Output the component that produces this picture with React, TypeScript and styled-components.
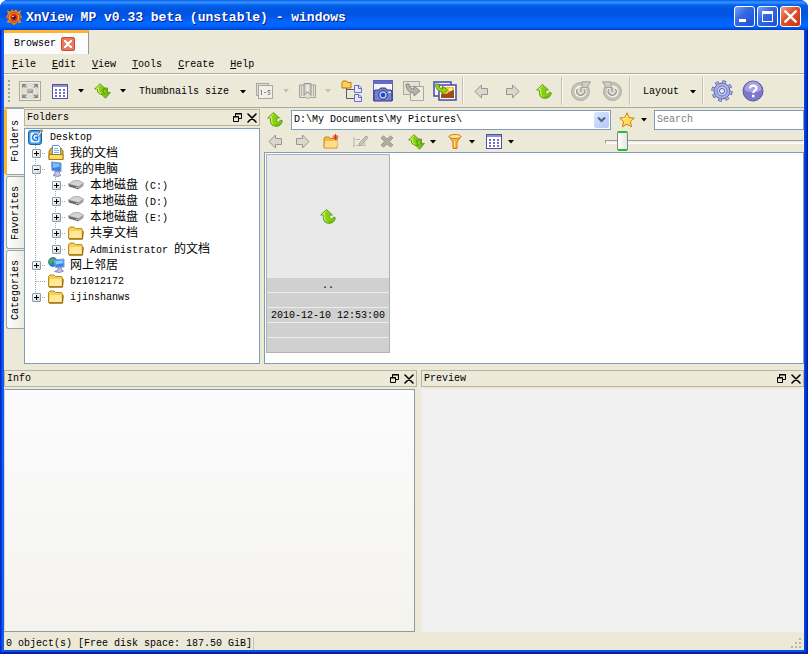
import React from "react";
import styled, { createGlobalStyle, css } from "styled-components";

const face = "#ece9d8";
const line = "#aca899";
const field = "#7f9db9";

const GlobalStyle = createGlobalStyle`
  * { box-sizing: border-box; }
  body { margin: 0; background: #fff; }
  body, button, input {
    font-family: "Liberation Mono", "Noto Sans CJK SC", monospace;
    font-size: 10px;
    line-height: 16px;
    color: #000;
  }
  button {
    margin: 0;
    padding: 0;
    border: 0;
    background: none;
    white-space: nowrap;
  }
  svg { display: block; flex: none; }
  ul { list-style: none; margin: 0; padding: 0; }
`;

/* ---------- window frame ---------- */

const Frame = styled.div`
  display: flex;
  flex-direction: column;
  min-height: 100vh;
  padding: 0 4px 4px;
  border-radius: 8px 8px 0 0;
  background: linear-gradient(90deg, #0019cf 0, #0831d9 1px, #166aee 3px, #0855dd 4px, #0855dd calc(100% - 4px), #0040e0 calc(100% - 3px), #0019a8 100%);
  box-shadow: inset 0 -2px #0a1fa8;
`;

const TitleBar = styled.header`
  display: flex;
  align-items: center;
  gap: 4px;
  height: 30px;
  margin: 0 -4px;
  padding: 3px 7px 0 6px;
  border-radius: 8px 8px 0 0;
  background: linear-gradient(#0058e6 0, #3a93ff 2px, #2a8bff 3px, #0364ee 5px, #0055e0 9px, #0054e3 15px, #0066ff 22px, #0066ff 26px, #0054e6 28px, #003dd7 100%);
`;

const Title = styled.h1`
  flex: 1;
  margin: 0;
  padding-top: 2px;
  font-size: 13px;
  line-height: 20px;
  font-weight: bold;
  color: #fff;
  text-shadow: 1px 1px #0a1883;
  white-space: nowrap;
`;

const CaptionButtons = styled.div`
  display: flex;
  gap: 2px;
`;

const CaptionButton = styled.button<{ $danger?: boolean }>`
  display: grid;
  place-items: center;
  width: 21px;
  height: 21px;
  border: 1px solid #fff;
  border-radius: 3px;
  background: ${(p) =>
    p.$danger
      ? "linear-gradient(135deg, #f0a088, #e2532f 40%, #c8350f)"
      : "linear-gradient(135deg, #7ba2f5, #3668e4 40%, #1f4fd0)"};
`;

const Client = styled.div`
  flex: 1;
  display: flex;
  flex-direction: column;
  background: ${face};
`;

/* ---------- tabs, menu, toolbar ---------- */

const TabStrip = styled.div`
  display: flex;
  height: 24px;
`;

const Tab = styled.div`
  display: flex;
  align-items: center;
  gap: 5px;
  padding: 0 13px 0 10px;
  border-top: 3px solid #ffb52e;
  border-right: 1px solid #919b9c;
  background: #fcfcfe;
`;

const TabClose = styled.button`
  display: grid;
  place-items: center;
  width: 14px;
  height: 14px;
  border: 1px solid #d9432a;
  border-radius: 2px;
  background: #e8795c;
`;

const MenuBar = styled.nav`
  display: flex;
  gap: 16px;
  height: 20px;
  padding: 3px 8px 0;
  border-bottom: 1px solid ${line};
`;

const ToolBar = styled.div`
  display: flex;
  align-items: center;
  height: 34px;
  border-top: 1px solid #fff;
  border-bottom: 1px solid ${line};
`;

const Grip = styled.span`
  width: 10px;
  height: 22px;
  background: repeating-linear-gradient(#a9a594 0 2px, transparent 2px 4px) 4px 0 / 2px 100% no-repeat;
`;

const Tool = styled.button<{ $w?: number }>`
  display: grid;
  place-items: center;
  flex: none;
  width: ${(p) => p.$w ?? 31}px;
  height: 24px;
`;

const DropTool = styled.button<{ $icon: number; $caret: number }>`
  display: grid;
  flex: none;
  grid-template-columns: ${(p) => p.$icon}px ${(p) => p.$caret}px;
  place-items: center;
  height: 24px;
`;

const TextTool = styled.button`
  display: flex;
  align-items: center;
  gap: 11px;
  height: 24px;
  padding: 2px 4px 0 10px;
`;

const Separator = styled.span`
  width: 2px;
  height: 28px;
  margin: 0 2px;
  border-left: 1px solid #c5c2b2;
  border-right: 1px solid #f8f7f1;
`;

const Spacer = styled.span<{ $w: number }>`
  flex: none;
  width: ${(p) => p.$w}px;
`;

/* ---------- panes ---------- */

const Panes = styled.main`
  flex: 1;
  display: grid;
  grid-template-rows: 256fr 263fr;
  gap: 5px;
`;

const TopPanes = styled.div`
  display: flex;
  gap: 4px;
`;

const BottomPanes = styled.div`
  display: grid;
  grid-template-columns: 413fr 383fr;
  gap: 4px;
`;

const LeftDock = styled.div`
  display: flex;
  flex: 0 0 32%;
`;

const SideTabs = styled.div`
  display: flex;
  flex-direction: column;
  align-items: flex-end;
  gap: 1px;
  width: 20px;
`;

const SideTab = styled.button<{ $active?: boolean }>`
  writing-mode: vertical-rl;
  transform: rotate(180deg);
  width: ${(p) => (p.$active ? 20 : 18)}px;
  padding: ${(p) => (p.$active ? "12px 1px 11px 0" : "8px 0 9px")};
  border: 1px solid #91a7b4;
  border-left: 0;
  border-radius: 0 3px 3px 0;
  background: linear-gradient(270deg, #fff, #eceadf);
  ${(p) =>
    p.$active &&
    css`
      border-right: 3px solid #ffb52e;
      background: #fcfcfe;
    `}
`;

const Pane = styled.section`
  display: flex;
  flex-direction: column;
  flex: 1;
  gap: 2px;
  min-width: 0;
  padding-top: 1px;
`;

const PaneHeader = styled.div`
  display: flex;
  align-items: center;
  gap: 5px;
  height: 17px;
  padding: 0 2px;
  border: 1px solid #b8b4a2;
`;

const PaneTitle = styled.h2`
  flex: 1;
  margin: 0;
  font-size: 10px;
  line-height: 14px;
  font-weight: normal;
`;

const InfoBody = styled.div`
  flex: 1;
  margin-right: 2px;
  border: 1px solid #919b9c;
  border-left-color: #d8d6c9;
  background: linear-gradient(#fcfcfe, #f4f3ee);
`;

const PreviewBody = styled.div`
  flex: 1;
  background: #f0f0f0;
`;

/* ---------- folder tree ---------- */

const TreeBox = styled.div`
  flex: 1;
  border: 1px solid ${field};
  background: #fff;
`;

const TreeRow = styled.li`
  display: flex;
  align-items: center;
  height: 16px;
  padding-left: 1px;
`;

const dots = "repeating-linear-gradient(#a5a396 0 1px, transparent 1px 2px)";
const hdots = "repeating-linear-gradient(90deg, #a5a396 0 1px, transparent 1px 2px)";

const Branch = styled.span<{ $through: boolean; $arm: boolean }>`
  display: grid;
  place-items: center;
  width: 20px;
  height: 16px;
  background-image: ${dots}, ${hdots};
  background-repeat: no-repeat;
  background-size: 1px ${(p) => (p.$through ? 16 : 8)}px, ${(p) => (p.$arm ? 10 : 0)}px 1px;
  background-position: 9px 0, 10px 8px;
`;

const Toggle = styled.button`
  display: grid;
  place-items: center;
  width: 9px;
  height: 9px;
  border: 1px solid #7f9db9;
  border-radius: 1px;
  background: linear-gradient(135deg, #fff, #d8d4c6);
`;

const NodeIcon = styled.span`
  display: grid;
  place-items: center;
  width: 16px;
  height: 16px;
  margin: 0 6px 0 2px;
`;

const NodeText = styled.span<{ $latin: boolean }>`
  padding-top: ${(p) => (p.$latin ? 2 : 0)}px;
  white-space: pre;
`;

const Han = styled.span`
  font-family: "Noto Sans CJK SC", sans-serif;
  font-size: 12px;
`;

/* ---------- browser ---------- */

const Browser = styled.section`
  display: flex;
  flex: 1;
  flex-direction: column;
  min-width: 0;
`;

const AddressRow = styled.div`
  display: flex;
  align-items: center;
  height: 23px;
`;

const Combo = styled.div`
  display: flex;
  flex: 1;
  align-items: center;
  height: 20px;
  margin: 0 0 0 5px;
  padding-right: 1px;
  border: 1px solid ${field};
  background: #fff;
`;

const TextField = styled.input`
  flex: 1;
  min-width: 0;
  width: 100%;
  height: 18px;
  padding: 0 2px;
  border: 0;
  outline: 0;
  background: #fff;
  &::placeholder { color: #808080; opacity: 1; }
`;

const ComboArrow = styled.button`
  display: grid;
  place-items: center;
  width: 15px;
  height: 16px;
  border-radius: 2px;
  background: linear-gradient(135deg, #dbe6fe, #b4c8f6);
`;

const SearchBox = styled.div`
  width: 150px;
  height: 20px;
  margin-left: 6px;
  border: 1px solid ${field};
`;

const ActionRow = styled.div`
  display: flex;
  align-items: center;
  gap: 5px;
  height: 21px;
`;

const ZoomSlider = styled.input`
  appearance: none;
  width: 199px;
  height: 20px;
  margin: 0 0 0 auto;
  background: none;
  &::-webkit-slider-runnable-track {
    height: 4px;
    border: 1px solid #fff;
    border-top-color: #9d9c99;
    border-left-color: #9d9c99;
    border-radius: 1px;
    background: #f3f2ea;
  }
  &::-webkit-slider-thumb {
    appearance: none;
    width: 11px;
    height: 20px;
    margin-top: -10px;
    border: 1px solid #778892;
    border-top: 2px solid #21c121;
    border-bottom: 2px solid #21c121;
    border-radius: 2px;
    background: linear-gradient(90deg, #fff, #e6e6de);
  }
`;

const FileList = styled.div`
  flex: 1;
  padding: 1px 1px 10px;
  border: 1px solid ${field};
  background: #fff;
`;

const Tile = styled.article`
  width: 124px;
  border: 1px solid #b0b0b0;
`;

const TileImage = styled.div`
  display: grid;
  place-items: center;
  height: 123px;
  background: #e9e9e9;
`;

const TileLine = styled.div`
  height: 15px;
  border-bottom: 1px solid #ececec;
  background: #d0d0d0;
  line-height: 15px;
  text-align: center;
  white-space: nowrap;
  &:last-child { height: 14px; border-bottom: 0; }
`;

const StatusBar = styled.footer`
  display: flex;
  align-items: flex-end;
  justify-content: space-between;
  height: 18px;
  padding: 0 2px;
`;

const StatusText = styled.span`
  padding-right: 1px;
  border-right: 1px solid #c5c2b2;
  line-height: 13px;
`;

/* ---------- icons ---------- */

const Caret = ({ dim }: { dim?: boolean }) => (
  <svg width="6" height="4" viewBox="0 0 6 4">
    <path d="M0 0h6L3 3.5z" fill={dim ? "#c2bfb0" : "#000"} />
  </svg>
);

const Cross = ({ size = 8, color = "#000", weight = 1.8 }) => (
  <svg width={size} height={size} viewBox="0 0 10 10">
    <path d="M1 1l8 8M9 1l-8 8" stroke={color} strokeWidth={weight} strokeLinecap="round" />
  </svg>
);

const AppLogo = () => (
  <svg width="16" height="16" viewBox="0 0 16 16">
    <path d="M1 1l3.500 2L6 0l2 2.500L10 0l1.500 3L15 1l-1 4 2 3-2 2 1 4-3.500-.5L8 16l-3.500-2.500L1 14l1-4-2-2 2-3z" fill="#f08a1c" />
    <ellipse cx="8" cy="8.500" rx="6" ry="4.800" fill="#f6a63c" stroke="#b5380f" />
    <circle cx="8" cy="8.500" r="3.800" fill="#d0300f" />
    <circle cx="8" cy="8.500" r="1.800" fill="#2a1a50" />
    <circle cx="7" cy="7.500" r="0.800" fill="#fff" />
  </svg>
);

const Refresh = () => (
  <svg width="17" height="16" viewBox="0 0 17 16">
    <g fill="#86d30c" stroke="#47850d" strokeWidth="0.700" strokeLinejoin="round">
      <path d="M9.500 5h4v4.500h3L11.500 15.300 6.500 10.200h2.600V8.500z" />
      <path d="M6 .7L11.500 6H8.700v2.500L11 11.300H6.500L3.500 9V6H.6z" />
    </g>
    <path d="M6 2L2.500 5.300h2V8.500L7 10.400" fill="none" stroke="#d6f870" />
    <path d="M12.500 6v4.300h2l-3 3.500" fill="none" stroke="#5fae0a" />
  </svg>
);

const UpArrow = () => (
  <svg width="16" height="15" viewBox="0 0 16 15">
    <path
      d="M6.500.5L12.500 6H9.700v2.500c0 1.500 1.200 2 2.300 1.300.8-.5 1.200-1.100 1.500-1.800l1.900.8c-.4 3.400-2.900 5.600-6.300 5.600C5.800 14.400 3.400 12.300 3.400 9V6H.6z"
      fill="#86d30c"
      stroke="#47850d"
      strokeWidth="0.700"
      strokeLinejoin="round"
    />
    <path d="M6.500 2L2.700 5.300h2V9c0 1.500.7 2.600 1.800 3.300" fill="none" stroke="#d6f870" />
    <path d="M8.500 12.800c2.600.4 4.600-.8 5.600-2.600" fill="none" stroke="#5fae0a" />
  </svg>
);

const SideArrow = ({ right }: { right?: boolean }) => (
  <svg width="15" height="15" viewBox="0 0 15 15">
    <path
      d={right ? "M14 7.500L7.500 1v3.500H1.500v6h6V14z" : "M1 7.500L7.500 1v3.500h6v6h-6V14z"}
      fill="#d9d8d0"
      stroke="#97958c"
      strokeLinejoin="round"
    />
  </svg>
);

const FullScreen = () => (
  <svg width="22" height="20" viewBox="0 0 22 20">
    <rect x=".5" y=".5" width="21" height="19" fill="#eeede6" stroke="#aaa89c" />
    <rect x="2" y="2" width="18" height="16" fill="#dddcd3" />
    <path d="M3 3h5L3 7zM19 3h-5l5 4zM3 17h5l-5-4zM19 17h-5l5-4z" fill="#8a8980" />
    <path d="M4 4l4 3M18 4l-4 3M4 16l4-3M18 16l-4-3" stroke="#8a8980" strokeWidth="1.500" />
    <rect x="7" y="7" width="8" height="6" fill="#b9b8ae" stroke="#f5f4ee" />
    <path d="M8 12h6V9z" fill="#9c9b91" />
  </svg>
);

const GridIcon = () => (
  <svg width="16" height="15" viewBox="0 0 16 15">
    <rect x=".5" y=".5" width="15" height="14" fill="#fff" stroke="#51519c" />
    <path d="M1 1h14v2H1z" fill="#8d8fd0" />
    {[5, 8, 11].map((y) => (
      <path key={y} d={`M3 ${y}h2v2h-2zM7 ${y}h2v2h-2zM11 ${y}h2v2h-2z`} fill="#6e70c4" />
    ))}
  </svg>
);

const PageRange = () => (
  <svg width="18" height="16" viewBox="0 0 18 16">
    <g stroke="#aaa89c">
      <rect x=".5" y=".5" width="12" height="12" fill="#deddd4" />
      <rect x="2.500" y="2.500" width="14" height="13" fill="#f0efe8" />
    </g>
    <path d="M4.500 8l1-1v5M8 9.500h2M14.500 7.500h-2.500v1.800h1.200c1.200 0 1.200 2.200 0 2.200H11.800" fill="none" stroke="#85847b" />
  </svg>
);

const Book = () => (
  <svg width="17" height="16" viewBox="0 0 17 16">
    <path d="M.5 2h5.500l2.500 1L11 2h5.500v12.500h-6l-2 1-2-1h-6z" fill="#e2e1d8" stroke="#a5a398" />
    <path d="M2.500 2v11M14.500 2v11" stroke="#b4b2a8" />
    <path d="M5 .5h7v12L8.500 9 5 12.500z" fill="#d0cfc5" stroke="#96948a" />
    <path d="M8.500 2v6" stroke="#f2f1eb" strokeWidth="2" />
  </svg>
);

const FolderTree = () => (
  <svg width="22" height="22" viewBox="0 0 22 22">
    <path d="M1 2.500L2 1h3.500l1 1.500H10V8H1z" fill="#fcd354" stroke="#b97a14" />
    <path d="M5.500 8v10.500h8M5.500 9.500h8" fill="none" stroke="#5c5a6e" />
    <g fill="#e6eaff" stroke="#6a6ec4">
      <path d="M13.500 5.500h4.500l2.500 2.500v4.500h-7z" />
      <path d="M13.500 14.500h4.500l2.500 2.500v4.500h-7z" />
    </g>
    <path d="M17.500 5.500v3h3M17.500 14.500v3h3" fill="none" stroke="#6a6ec4" />
  </svg>
);

const Camera = () => (
  <svg width="22" height="22" viewBox="0 0 22 22">
    <rect x="1.500" y=".5" width="19" height="20" fill="#f4f5ff" stroke="#5d5fa9" />
    <path d="M1 1h20v3H1z" fill="#6669c6" />
    <path d="M2 11l1-1h4l1.500-2h5L15 10h4l1 1v10H2z" fill="#7480d2" stroke="#34377d" />
    <circle cx="11" cy="15" r="4.200" fill="#c8d3ff" stroke="#2d2f75" />
    <circle cx="11" cy="15" r="2.300" fill="#1f45c9" />
    <path d="M16.500 11.500h2v1.500h-2z" fill="#fff" />
  </svg>
);

const Convert = () => (
  <svg width="22" height="20" viewBox="0 0 22 20">
    <rect x=".5" y=".5" width="16" height="13" fill="#e4e3da" stroke="#aaa89c" />
    <path d="M7.500 5.500h13v14h-13z" fill="#ecebe3" stroke="#aaa89c" />
    <path d="M3 3c0 6 3 9 8 9v3l6-5-6-5v3C8 8 6 6 6 3z" fill="#b4b3a9" stroke="#8d8b81" />
  </svg>
);

const PictureConvert = () => (
  <svg width="24" height="20" viewBox="0 0 24 20">
    <rect x="1" y="1" width="17" height="14" fill="#f3f4ff" stroke="#4348ad" strokeWidth="1.500" />
    <rect x="6" y="4" width="17" height="15" fill="#fff" stroke="#4348ad" strokeWidth="1.500" />
    <rect x="8" y="6" width="13" height="11" fill="#ffbd2e" />
    <path d="M8 17v-4c3-1 4 1 7-1 2-2 4-3 6-3v8z" fill="#a54a12" />
    <circle cx="17.500" cy="8.500" r="1.800" fill="#fff29c" />
    <path d="M2.500 3c0 5 3 8 7 8v3l5-5-5-4v3C7 8 6 6 6 3z" fill="#8fd416" stroke="#47850d" strokeWidth="0.800" />
  </svg>
);

const Rotate = ({ right }: { right?: boolean }) => (
  <svg width="20" height="20" viewBox="0 0 20 20">
    <g transform={right ? "translate(20 0) scale(-1 1)" : undefined}>
      <circle cx="9.500" cy="10.500" r="9" fill="#c4c3ba" stroke="#aeaca2" />
      <circle cx="9.500" cy="10.500" r="5" fill="#dddcd3" stroke="#f3f2ec" strokeWidth="2" />
      <path d="M10 6v5M6.500 8a4 4 0 1 0 6.500 0" fill="none" stroke="#96948a" strokeWidth="1.200" />
      <path d="M11 6.500V.8h8.500L16 6.500z" fill="#cfcec5" stroke="#a3a197" />
    </g>
  </svg>
);

const Gear = () => (
  <svg width="22" height="22" viewBox="0 0 22 22">
    <circle cx="11" cy="11" r="9" fill="none" stroke="#5a60a8" strokeWidth="3.400" strokeDasharray="3.600 3.469" />
    <circle cx="11" cy="11" r="8" fill="#a9b2e6" stroke="#5a60a8" />
    <circle cx="11" cy="11" r="9" fill="none" stroke="#a9b2e6" strokeWidth="2" strokeDasharray="2.600 4.469" strokeDashoffset="-0.500" />
    <circle cx="11" cy="11" r="5" fill="#c4cbf2" stroke="#7077bd" />
    <circle cx="11" cy="11" r="2.500" fill="#eeeff8" stroke="#5a60a8" />
  </svg>
);

const HelpIcon = () => (
  <svg width="22" height="22" viewBox="0 0 22 22">
    <circle cx="11" cy="11" r="10" fill="#7d78cd" stroke="#5a569c" />
    <path d="M2.500 10a8.500 8.500 0 0 1 17 0c-5 3-12 3-17 0z" fill="#a5a3e2" />
    <path d="M8 8.500c0-4 6.500-3.700 6.500-.3 0 2.300-3.300 2.300-3.300 4.800" fill="none" stroke="#fff" strokeWidth="2.200" />
    <circle cx="11.200" cy="16" r="1.400" fill="#fff" />
  </svg>
);

const Star = () => (
  <svg width="16" height="16" viewBox="0 0 16 16">
    <path d="M8 .8l2.100 4.800 5.200.5-3.900 3.500 1.200 5.200L8 12.200l-4.600 2.600 1.200-5.200L.7 6.100l5.200-.5z" fill="#ffdd55" stroke="#cf7f12" strokeLinejoin="round" />
    <path d="M8 3.500L6.700 6.600l-3.200.3" fill="none" stroke="#fff6b8" />
  </svg>
);

const Chevron = () => (
  <svg width="9" height="7" viewBox="0 0 9 7">
    <path d="M1 1.500l3.500 3.500L8 1.500" fill="none" stroke="#4d6185" strokeWidth="2" />
  </svg>
);

const NewFolder = () => (
  <svg width="16" height="15" viewBox="0 0 16 15">
    <path d="M1 4.500L2 3h4l1 1.500h7v9.500H1z" fill="#f6b73c" stroke="#c98a2a" />
    <path d="M1.500 13.500L2.500 7h12l-1 6.500z" fill="#ffdf8a" />
    <path d="M12.500 0v6M9.500 3h6M10.500 1l4 4M14.500 1l-4 4" stroke="#dc2f1b" />
  </svg>
);

const Rename = () => (
  <svg width="17" height="13" viewBox="0 0 17 13">
    <path d="M1 3h2M1 11h2M2 3v8M4 4.500h4M4 10.500h2M10 10.500h3V8" fill="none" stroke="#b4b2a8" />
    <path d="M7 11l.5-3L14 1l2 1.500L9.500 10z" fill="#c9c8be" stroke="#a3a197" />
  </svg>
);

const DeleteIcon = () => (
  <svg width="14" height="13" viewBox="0 0 14 13">
    <path d="M1 3l2.500-2L7 4l3.500-3L13 3 9.500 6.500 13 10l-2.500 2L7 9l-3.500 3L1 10l3.500-3.500z" fill="#aeada4" stroke="#9c9b91" />
  </svg>
);

const Filter = () => (
  <svg width="14" height="15" viewBox="0 0 14 15">
    <path d="M1 2.500L5 8v6.500h4V8l4-5.500z" fill="#ffb338" stroke="#c98017" />
    <path d="M6.500 7v6" stroke="#ffe69a" />
    <ellipse cx="7" cy="2.500" rx="6" ry="2" fill="#ffe69a" stroke="#c98017" />
  </svg>
);

const Float = () => (
  <svg width="9" height="9" viewBox="0 0 9 9">
    <path d="M2.500 3V.5h6v5H6M2 1h7" fill="none" stroke="#000" />
    <path d="M.5 3.500h5v5h-5zM0 4h6" fill="none" stroke="#000" />
  </svg>
);

const DesktopIcon = () => (
  <svg width="16" height="16" viewBox="0 0 16 16">
    <rect x=".5" y="1.500" width="13" height="14" rx="2.500" fill="#3e9ce8" stroke="#1361b5" />
    <rect x="2.500" y="3.500" width="9" height="10" rx="1.500" fill="#e6f5ff" />
    <path d="M9.500 5.500c-3-1.500-5 1-5 3s2 3.500 5 2.500V8.500H7" fill="none" stroke="#1a6fc8" strokeWidth="1.300" />
    <path d="M9 7l3.500-5 1.500 1-3.500 5z" fill="#fff" stroke="#1a5fae" strokeWidth="0.700" />
    <path d="M12 1l1-1 2.500 1.500-1 1.500z" fill="#e68a2c" />
  </svg>
);

const Documents = () => (
  <svg width="16" height="16" viewBox="0 0 16 16">
    <path d="M1 6l2-3h10l2 3v8.500H1z" fill="#e7ad2d" stroke="#a87712" />
    <path d="M4.500.5h6l2 2V10h-8z" fill="#fff" stroke="#5d92c9" />
    <path d="M6 3.500h4M6 5.500h5M6 7.500h5" stroke="#7cb1e2" />
    <path d="M1 9.500h14v5H1z" fill="#fbdc6c" stroke="#a87712" />
  </svg>
);

const Computer = () => (
  <svg width="16" height="16" viewBox="0 0 16 16">
    <path d="M3.500 1L13 2v8.500L4 9.500z" fill="#2f86ea" stroke="#7e98c0" />
    <path d="M4.500 2l7 .8v3L5 7z" fill="#79c3ff" />
    <path d="M7 10.500h4l.5 2 1.500 1.500-3 1.500-5-1L7 13z" fill="#c7c3e6" stroke="#8d88bd" />
  </svg>
);

const Network = () => (
  <svg width="17" height="16" viewBox="0 0 17 16">
    <circle cx="5" cy="5" r="4.500" fill="#2a78dd" stroke="#1c4f9c" strokeWidth="0.600" />
    <path d="M2 2c2-1.500 4-1 4 1S4 5 3 7 1 5 1 4z" fill="#46b53a" />
    <path d="M6 3l10-1v8L7.500 10.500z" fill="#2f86ea" stroke="#8aa3cc" />
    <path d="M7 4l8-.8v3L8 7.500z" fill="#84cbff" />
    <path d="M10 11h3.500v2l2 1-4 1.500-5-1L10 13z" fill="#c7c3e6" stroke="#8d88bd" />
  </svg>
);

const Drive = () => (
  <svg width="16" height="10" viewBox="0 0 16 10">
    <path d="M.5 4L6 .7h5l4.500 2.500-5 3.500z" fill="#d6d6d6" stroke="#8b8b8b" strokeWidth="0.700" />
    <path d="M.5 4l10 2.700v2.800L.7 6.500z" fill="#6e6e6e" />
    <path d="M10.500 6.700l5-3.500v2.500l-5 3.800z" fill="#9b9b9b" />
    <path d="M8 7.500h1.500" stroke="#a7f07e" />
  </svg>
);

const Folder = () => (
  <svg width="16" height="14" viewBox="0 0 16 14">
    <path d="M.5 12.500V2.500L2 1h4l1.500 1.500h6L14.500 4v8.500z" fill="#f7ce55" stroke="#bd8a1a" />
    <path d="M1.500 12L2 5h11l.5 7z" fill="#ffe999" />
    <path d="M1 13.200h13.500l.8-8" fill="none" stroke="#8f6409" />
  </svg>
);

const SizeGrip = () => (
  <svg width="11" height="13" viewBox="0 0 11 13">
    <path d="M8 1h2v2H8zM8 5h2v2H8zM4 5h2v2H4zM8 9h2v2H8zM4 9h2v2H4zM0 9h2v2H0z" fill="#b8b4a2" />
  </svg>
);

/* ---------- data ---------- */

type Node = {
  depth: 0 | 1 | 2;
  icon: React.ReactNode;
  han?: string;
  before?: string;
  after?: string;
  toggle?: "+" | "-";
  last?: boolean;
};

const nodes: Node[] = [
  { depth: 0, icon: <DesktopIcon />, before: "Desktop" },
  { depth: 1, icon: <Documents />, han: "我的文档", toggle: "+" },
  { depth: 1, icon: <Computer />, han: "我的电脑", toggle: "-" },
  { depth: 2, icon: <Drive />, han: "本地磁盘", after: " (C:)", toggle: "+" },
  { depth: 2, icon: <Drive />, han: "本地磁盘", after: " (D:)", toggle: "+" },
  { depth: 2, icon: <Drive />, han: "本地磁盘", after: " (E:)", toggle: "+" },
  { depth: 2, icon: <Folder />, han: "共享文档", toggle: "+" },
  { depth: 2, icon: <Folder />, before: "Administrator ", han: "的文档", toggle: "+", last: true },
  { depth: 1, icon: <Network />, han: "网上邻居", toggle: "+" },
  { depth: 1, icon: <Folder />, before: "bz1012172" },
  { depth: 1, icon: <Folder />, before: "ijinshanws", toggle: "+", last: true },
];

const menus = ["File", "Edit", "View", "Tools", "Create", "Help"];

const HeaderButtons = () => (
  <>
    <button aria-label="Float"><Float /></button>
    <button aria-label="Close"><Cross size={10} weight={1.6} /></button>
  </>
);

const Drop = ({ label, icon, dim, small }: { label: string; icon: React.ReactNode; dim?: boolean; small?: boolean }) => (
  <DropTool aria-label={label} $icon={small ? 26 : 30} $caret={small ? 8 : 12}>
    {icon}
    <Caret dim={dim} />
  </DropTool>
);

export default function App() {
  return (
    <>
      <GlobalStyle />
      <Frame>
        <TitleBar>
          <AppLogo />
          <Title>XnView MP v0.33 beta (unstable) - windows</Title>
          <CaptionButtons>
            <CaptionButton aria-label="Minimize">
              <svg width="13" height="13" viewBox="0 0 13 13"><path d="M1 9h7v3H1z" fill="#fff" /></svg>
            </CaptionButton>
            <CaptionButton aria-label="Maximize">
              <svg width="13" height="13" viewBox="0 0 13 13"><path d="M1 1h11v11H1zM2 4v7h9V4z" fill="#fff" fillRule="evenodd" /></svg>
            </CaptionButton>
            <CaptionButton aria-label="Close" $danger><Cross size={13} color="#fff" /></CaptionButton>
          </CaptionButtons>
        </TitleBar>

        <Client>
          <TabStrip>
            <Tab>
              Browser
              <TabClose aria-label="Close tab"><Cross size={8} color="#fff" weight={2.6} /></TabClose>
            </Tab>
          </TabStrip>

          <MenuBar>
            {menus.map((m) => (
              <button key={m}><u>{m[0]}</u>{m.slice(1)}</button>
            ))}
          </MenuBar>

          <ToolBar>
            <Grip />
            <Tool aria-label="Full screen"><FullScreen /></Tool>
            <Drop label="View as" icon={<GridIcon />} />
            <Drop label="Sort by" icon={<Refresh />} />
            <TextTool>Thumbnails size<Caret /></TextTool>
            <Drop label="Rating" icon={<PageRange />} dim />
            <Drop label="Bookmarks" icon={<Book />} dim />
            <Spacer $w={2} />
            <Tool aria-label="Folder tree"><FolderTree /></Tool>
            <Tool aria-label="Capture"><Camera /></Tool>
            <Tool aria-label="Convert"><Convert /></Tool>
            <Tool aria-label="Batch convert"><PictureConvert /></Tool>
            <Separator />
            <Tool aria-label="Back"><SideArrow /></Tool>
            <Tool aria-label="Forward"><SideArrow right /></Tool>
            <Tool aria-label="Up"><UpArrow /></Tool>
            <Separator />
            <Tool aria-label="Rotate left"><Rotate /></Tool>
            <Tool aria-label="Rotate right"><Rotate right /></Tool>
            <Separator />
            <TextTool>Layout<Caret /></TextTool>
            <Separator />
            <Tool aria-label="Settings"><Gear /></Tool>
            <Tool aria-label="Help"><HelpIcon /></Tool>
          </ToolBar>

          <Panes>
            <TopPanes>
              <LeftDock>
                <SideTabs>
                  <SideTab $active>Folders</SideTab>
                  <SideTab>Favorites</SideTab>
                  <SideTab>Categories</SideTab>
                </SideTabs>
                <Pane>
                  <PaneHeader>
                    <PaneTitle>Folders</PaneTitle>
                    <HeaderButtons />
                  </PaneHeader>
                  <TreeBox>
                    <ul>
                      {nodes.map((n, i) => (
                        <TreeRow key={i}>
                          {n.depth === 2 && <Branch $through $arm={false} />}
                          {n.depth > 0 && (
                            <Branch $through={!n.last} $arm>
                              {n.toggle && (
                                <Toggle aria-label={n.toggle === "+" ? "Expand" : "Collapse"}>
                                  <svg width="5" height="5" viewBox="0 0 5 5">
                                    <path d={n.toggle === "+" ? "M0 2h5v1H0zM2 0h1v5H2z" : "M0 2h5v1H0z"} />
                                  </svg>
                                </Toggle>
                              )}
                            </Branch>
                          )}
                          <NodeIcon>{n.icon}</NodeIcon>
                          <NodeText $latin={!n.han}>{n.before}{n.han && <Han>{n.han}</Han>}{n.after}</NodeText>
                        </TreeRow>
                      ))}
                    </ul>
                  </TreeBox>
                </Pane>
              </LeftDock>

              <Browser>
                <AddressRow>
                  <Tool $w={22} aria-label="Parent folder"><UpArrow /></Tool>
                  <Combo>
                    <TextField aria-label="Path" defaultValue={"D:\\My Documents\\My Pictures\\"} />
                    <ComboArrow aria-label="Recent paths"><Chevron /></ComboArrow>
                  </Combo>
                  <Spacer $w={3} />
                  <Drop small label="Favorites" icon={<Star />} />
                  <SearchBox><TextField aria-label="Search" placeholder="Search" /></SearchBox>
                </AddressRow>
                <ActionRow>
                  <Tool $w={22} aria-label="Back"><SideArrow /></Tool>
                  <Tool $w={22} aria-label="Forward"><SideArrow right /></Tool>
                  <Tool $w={26} aria-label="New folder"><NewFolder /></Tool>
                  <Tool $w={22} aria-label="Rename"><Rename /></Tool>
                  <Tool $w={22} aria-label="Delete"><DeleteIcon /></Tool>
                  <Drop small label="Sort" icon={<Refresh />} />
                  <Drop small label="Filter" icon={<Filter />} />
                  <Drop small label="View" icon={<GridIcon />} />
                  <ZoomSlider type="range" aria-label="Thumbnail zoom" min={0} max={100} defaultValue={6} />
                </ActionRow>
                <FileList>
                  <Tile>
                    <TileImage><UpArrow /></TileImage>
                    <TileLine>..</TileLine>
                    <TileLine />
                    <TileLine>2010-12-10 12:53:00</TileLine>
                    <TileLine />
                    <TileLine />
                  </Tile>
                </FileList>
              </Browser>
            </TopPanes>

            <BottomPanes>
              <Pane>
                <PaneHeader>
                  <PaneTitle>Info</PaneTitle>
                  <HeaderButtons />
                </PaneHeader>
                <InfoBody />
              </Pane>
              <Pane>
                <PaneHeader>
                  <PaneTitle>Preview</PaneTitle>
                  <HeaderButtons />
                </PaneHeader>
                <PreviewBody />
              </Pane>
            </BottomPanes>
          </Panes>

          <StatusBar>
            <StatusText>0 object(s) [Free disk space: 187.50 GiB]</StatusText>
            <SizeGrip />
          </StatusBar>
        </Client>
      </Frame>
    </>
  );
}
